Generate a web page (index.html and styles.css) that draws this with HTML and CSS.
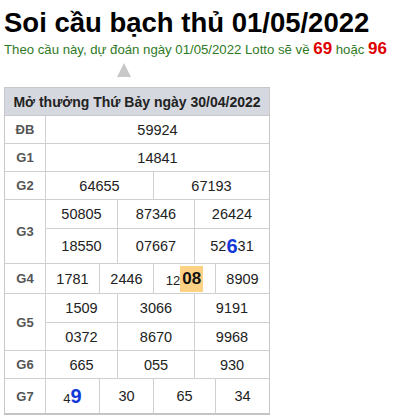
FILE: index.html
```html
<!DOCTYPE html>
<html lang="vi">
<head>
<meta charset="utf-8">
<link rel="stylesheet" href="styles.css">
</head>
<body>
<h1 class="title">Soi cầu bạch thủ 01/05/2022</h1>
<p class="sub">Theo cầu này, dự đoán ngày 01/05/2022 Lotto sẽ về <b class="red">69</b> hoặc <b class="red">96</b></p>
<div class="arrow"></div>
<div class="tbl">
  <div class="head">Mở thưởng Thứ Bảy ngày 30/04/2022</div>
  <div class="row r1"><div class="lbl">ĐB</div><div class="c">59924</div></div>
  <div class="row r1"><div class="lbl">G1</div><div class="c">14841</div></div>
  <div class="row r2"><div class="lbl">G2</div><div class="c">64655</div><div class="c">67193</div></div>
  <div class="row r3 two">
    <div class="lbl">G3</div>
    <div class="c">50805</div><div class="c">87346</div><div class="c">26424</div>
    <div class="c tall">18550</div><div class="c tall">07667</div><div class="c tall">52<b class="blue">6</b>31</div>
  </div>
  <div class="row r4 g4"><div class="lbl">G4</div><div class="c">1781</div><div class="c">2446</div><div class="c"><span class="sm">12</span><b class="hl">08</b></div><div class="c">8909</div></div>
  <div class="row r3 two">
    <div class="lbl">G5</div>
    <div class="c">1509</div><div class="c">3066</div><div class="c">9191</div>
    <div class="c">0372</div><div class="c">8670</div><div class="c">9968</div>
  </div>
  <div class="row r3"><div class="lbl">G6</div><div class="c">665</div><div class="c">055</div><div class="c">930</div></div>
  <div class="row r4 g7"><div class="lbl">G7</div><div class="c"><span class="sm">4</span><b class="blue big">9</b></div><div class="c">30</div><div class="c">65</div><div class="c">34</div></div>
</div>
</body>
</html>
```
FILE: styles.css
```css
* { box-sizing: border-box; }
body {
  margin: 0;
  padding: 6px 4px 0 4px;
  font-family: "Liberation Sans", Arial, sans-serif;
  color: #222;
  background: #fff;
}
.title {
  margin: 0;
  font-size: 27.5px;
  line-height: 34px;
  font-weight: bold;
  color: #000;
}
.sub {
  margin: 0;
  font-size: 13.2px;
  line-height: 18px;
  color: #2f7a25;
  white-space: nowrap;
}
.red { color: #e00000; font-size: 17px; }
.arrow {
  width: 0;
  height: 0;
  margin: 4px 0 10px 113px;
  border-left: 7.5px solid transparent;
  border-right: 7.5px solid transparent;
  border-bottom: 14px solid #c8c8c8;
}
.tbl {
  width: 266px;
  border: 1px solid #c8c8c8;
  border-bottom: 2px solid #c4c4c4;
}
.head {
  background: #d5d8df;
  font-weight: bold;
  font-size: 14px;
  color: #222;
  text-align: center;
  white-space: nowrap;
  height: 28px;
  line-height: 28px;
  border-bottom: 1px solid #c8c8c8;
}
.row {
  display: grid;
  border-bottom: 1px solid #d0d0d0;
}
.row:last-child { border-bottom: none; }
.lbl {
  font-weight: bold;
  color: #555;
  font-size: 13px;
  display: flex;
  align-items: center;
  justify-content: center;
  border-right: 1px solid #d0d0d0;
  grid-row: span 2;
}
.c {
  font-size: 14.5px;
  display: flex;
  align-items: center;
  justify-content: center;
  height: 27px;
  border-right: 1px solid #d0d0d0;
}
.c:last-child, .r2 .c:nth-child(3), .r3 .c:nth-child(4), .r3 .c:nth-child(7), .r4 .c:nth-child(5) { border-right: none; }
.r1 { grid-template-columns: 41px 1fr; }
.r2 { grid-template-columns: 41px 108px 1fr; }
.r3 { grid-template-columns: 41px 72px 77px 1fr; }
.r4 { grid-template-columns: 41px 54px 54px 62px 1fr; }
.two .c:nth-child(-n+4) { border-bottom: 1px solid #d0d0d0; height: 29px; }
.two .c.tall { height: 34px; }
.g4 .c { height: 29px; }
.g7 .c { height: 34px; }
.sm { font-size: 13px; margin-top: 4px; }
.blue { color: #1238d8; font-size: 20px; }
.hl {
  background: #fdd285;
  font-size: 17px;
  color: #111;
  padding: 3px 2px;
}
```
